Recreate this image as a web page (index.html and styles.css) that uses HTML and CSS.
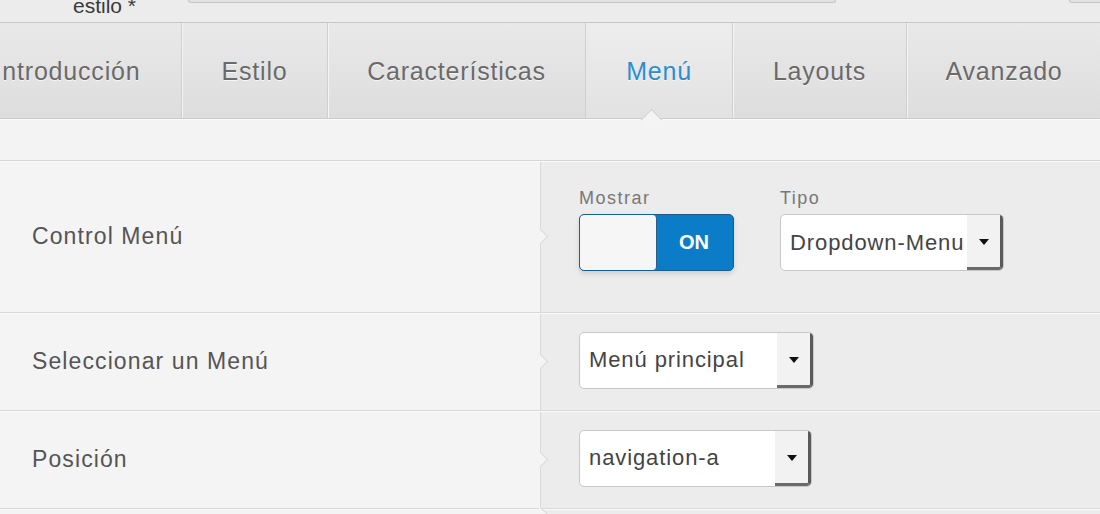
FILE: index.html
```html
<!DOCTYPE html>
<html lang="es">
<head>
    <meta charset="UTF-8">
    <meta name="viewport" content="width=device-width, initial-scale=1.0">
    <title>Menú</title>
    <link rel="stylesheet" href="styles.css">
</head>
<body>

    <div class="topbar">
        <span class="doc-title">estilo *</span>
        <div class="top-field"></div>
        <div class="top-field right"></div>
    </div>

    <nav class="tabs">
        <div class="tab t-intro">Introducción</div>
        <div class="tab t-estilo">Estilo</div>
        <div class="tab t-caract">Características</div>
        <div class="tab t-menu active">Menú</div>
        <div class="tab t-layouts">Layouts</div>
        <div class="tab t-avanzado">Avanzado</div>
    </nav>

    <div class="subbar"></div>

    <div class="row row-tall">
        <div class="label">Control Menú</div>
        <div class="controls">
            <div class="field">
                <span class="caption">Mostrar</span>
                <div class="switch">
                    <span class="knob"></span>
                    <span class="state">ON</span>
                </div>
            </div>
            <div class="field">
                <span class="caption">Tipo</span>
                <div class="select w-type">
                    <span class="value">Dropdown-Menu</span>
                    <span class="arrow"></span>
                </div>
            </div>
        </div>
    </div>

    <div class="row">
        <div class="label">Seleccionar un Menú</div>
        <div class="controls">
            <div class="select w-menu">
                <span class="value">Menú principal</span>
                <span class="arrow"></span>
            </div>
        </div>
    </div>

    <div class="row">
        <div class="label">Posición</div>
        <div class="controls">
            <div class="select w-pos">
                <span class="value">navigation-a</span>
                <span class="arrow"></span>
            </div>
        </div>
    </div>

    <div class="row row-last">
        <div class="label"></div>
        <div class="controls"></div>
    </div>

</body>
</html>
```

FILE: styles.css
```css
body {
    font-family: "Liberation Sans", Arial, sans-serif;
    background-color: #ececec;
    color: #555;
    margin: 0;
    width: 1100px;
    height: 514px;
    overflow: hidden;
}
.topbar {
    height: 22px;
    background: #ececec;
    border-bottom: 1px solid #c6c6c6;
    display: flex;
    align-items: flex-start;
    overflow: hidden;
}
.doc-title {
    font-size: 21px;
    line-height: 24px;
    color: #3a3a3a;
    margin: -6px 0 0 73px;
    width: 115px;
    flex: none;
}
.top-field {
    width: 646px;
    height: 2px;
    border: 1px solid #c4c4c4;
    border-top: none;
    border-radius: 0 0 5px 5px;
    background: #e3e3e3;
    flex: none;
}
.top-field.right {
    margin-left: 233px;
    width: 40px;
}
.tabs {
    display: flex;
    height: 95px;
    background: linear-gradient(#e9e9e9, #dddddd);
    border-bottom: 1px solid #cdcdcd;
    margin-left: -46px;
}
.tab {
    flex: none;
    display: flex;
    align-items: center;
    justify-content: center;
    font-size: 25px;
    letter-spacing: 0.8px;
    color: #6a6a6a;
    text-shadow: 0 1px 0 #f6f6f6;
    border-right: 1px solid #cfcfcf;
    box-shadow: 1px 0 0 #f4f4f4;
    position: relative;
    padding-top: 2px;
    box-sizing: border-box;
}
.t-intro { width: 228px; }
.t-estilo { width: 146px; }
.t-caract { width: 258px; }
.t-menu { width: 147px; }
.t-layouts { width: 174px; }
.t-avanzado { width: 240px; border-right: none; padding-right: 46px; }
.tab.active {
    color: #2a8ed3;
    background: linear-gradient(#ededed, #e2e2e2);
}
.tab.active::after {
    content: "";
    position: absolute;
    bottom: -1px;
    left: 58px;
    width: 14px;
    height: 14px;
    background: #f4f4f4;
    border-left: 1px solid #cdcdcd;
    border-top: 1px solid #cdcdcd;
    transform: translateY(8px) rotate(45deg);
}
.subbar {
    height: 40px;
    background: #f3f3f3;
    border-top: 1px solid #fafafa;
    border-bottom: 1px solid #d6d6d6;
}
.row {
    display: flex;
    border-top: 1px solid #fafafa;
    border-bottom: 1px solid #d8d8d8;
    min-height: 96px;
}
.row-tall {
    min-height: 150px;
}
.row-last {
    min-height: 10px;
}
.label {
    width: 508px;
    flex: none;
    background: #f4f4f4;
    padding-left: 32px;
    display: flex;
    align-items: center;
    font-size: 23px;
    letter-spacing: 1.1px;
    color: #555;
    padding-bottom: 2px;
}
.controls {
    flex: 1;
    background: #ececec;
    border-left: 1px solid #d9d9d9;
    display: flex;
    align-items: center;
    gap: 46px;
    padding-left: 38px;
    padding-bottom: 4px;
    position: relative;
}
.controls::before {
    content: "";
    position: absolute;
    left: -6px;
    top: 50%;
    width: 10px;
    height: 10px;
    margin-top: -6px;
    background: #f4f4f4;
    border-top: 1px solid #d9d9d9;
    border-right: 1px solid #d9d9d9;
    transform: rotate(45deg);
}
.row-tall .controls {
    align-items: flex-start;
    padding-top: 24px;
}
.field {
    display: flex;
    flex-direction: column;
}
.caption {
    font-size: 18px;
    letter-spacing: 1.5px;
    color: #777;
    line-height: 24px;
    margin-bottom: 4px;
}
.switch {
    width: 155px;
    height: 57px;
    box-sizing: border-box;
    border: 1px solid #1b5d92;
    border-radius: 5px;
    background: #0b7dc8;
    display: flex;
    box-shadow: 0 3px 5px rgba(0, 0, 0, 0.12);
    overflow: hidden;
}
.knob {
    width: 76px;
    background: #f6f6f6;
    border-right: 1px solid #2a5f8c;
    border-radius: 4px;
    flex: none;
}
.state {
    flex: 1;
    display: flex;
    align-items: center;
    justify-content: center;
    color: #fff;
    font-weight: bold;
    font-size: 20px;
    padding-right: 2px;
}
.select {
    height: 57px;
    box-sizing: border-box;
    border: 1px solid #c8c8c8;
    border-radius: 5px;
    background: #fff;
    display: flex;
    overflow: hidden;
}
.w-type { width: 224px; }
.w-menu { width: 235px; }
.w-pos { width: 233px; }
.value {
    flex: 1;
    display: flex;
    align-items: center;
    padding-left: 9px;
    font-size: 22px;
    letter-spacing: 0.9px;
    color: #444;
    white-space: nowrap;
    overflow: hidden;
}
.arrow {
    width: 33px;
    flex: none;
    background: #f2f2f2;
    border-right: 3px solid #5a5a5a;
    border-bottom: 3px solid #6a6a6a;
    border-radius: 0 0 4px 0;
    display: flex;
    align-items: center;
    justify-content: center;
}
.arrow::after {
    content: "";
    border-left: 5px solid transparent;
    border-right: 5px solid transparent;
    border-top: 6px solid #111;
    margin-top: 2px;
}
```
